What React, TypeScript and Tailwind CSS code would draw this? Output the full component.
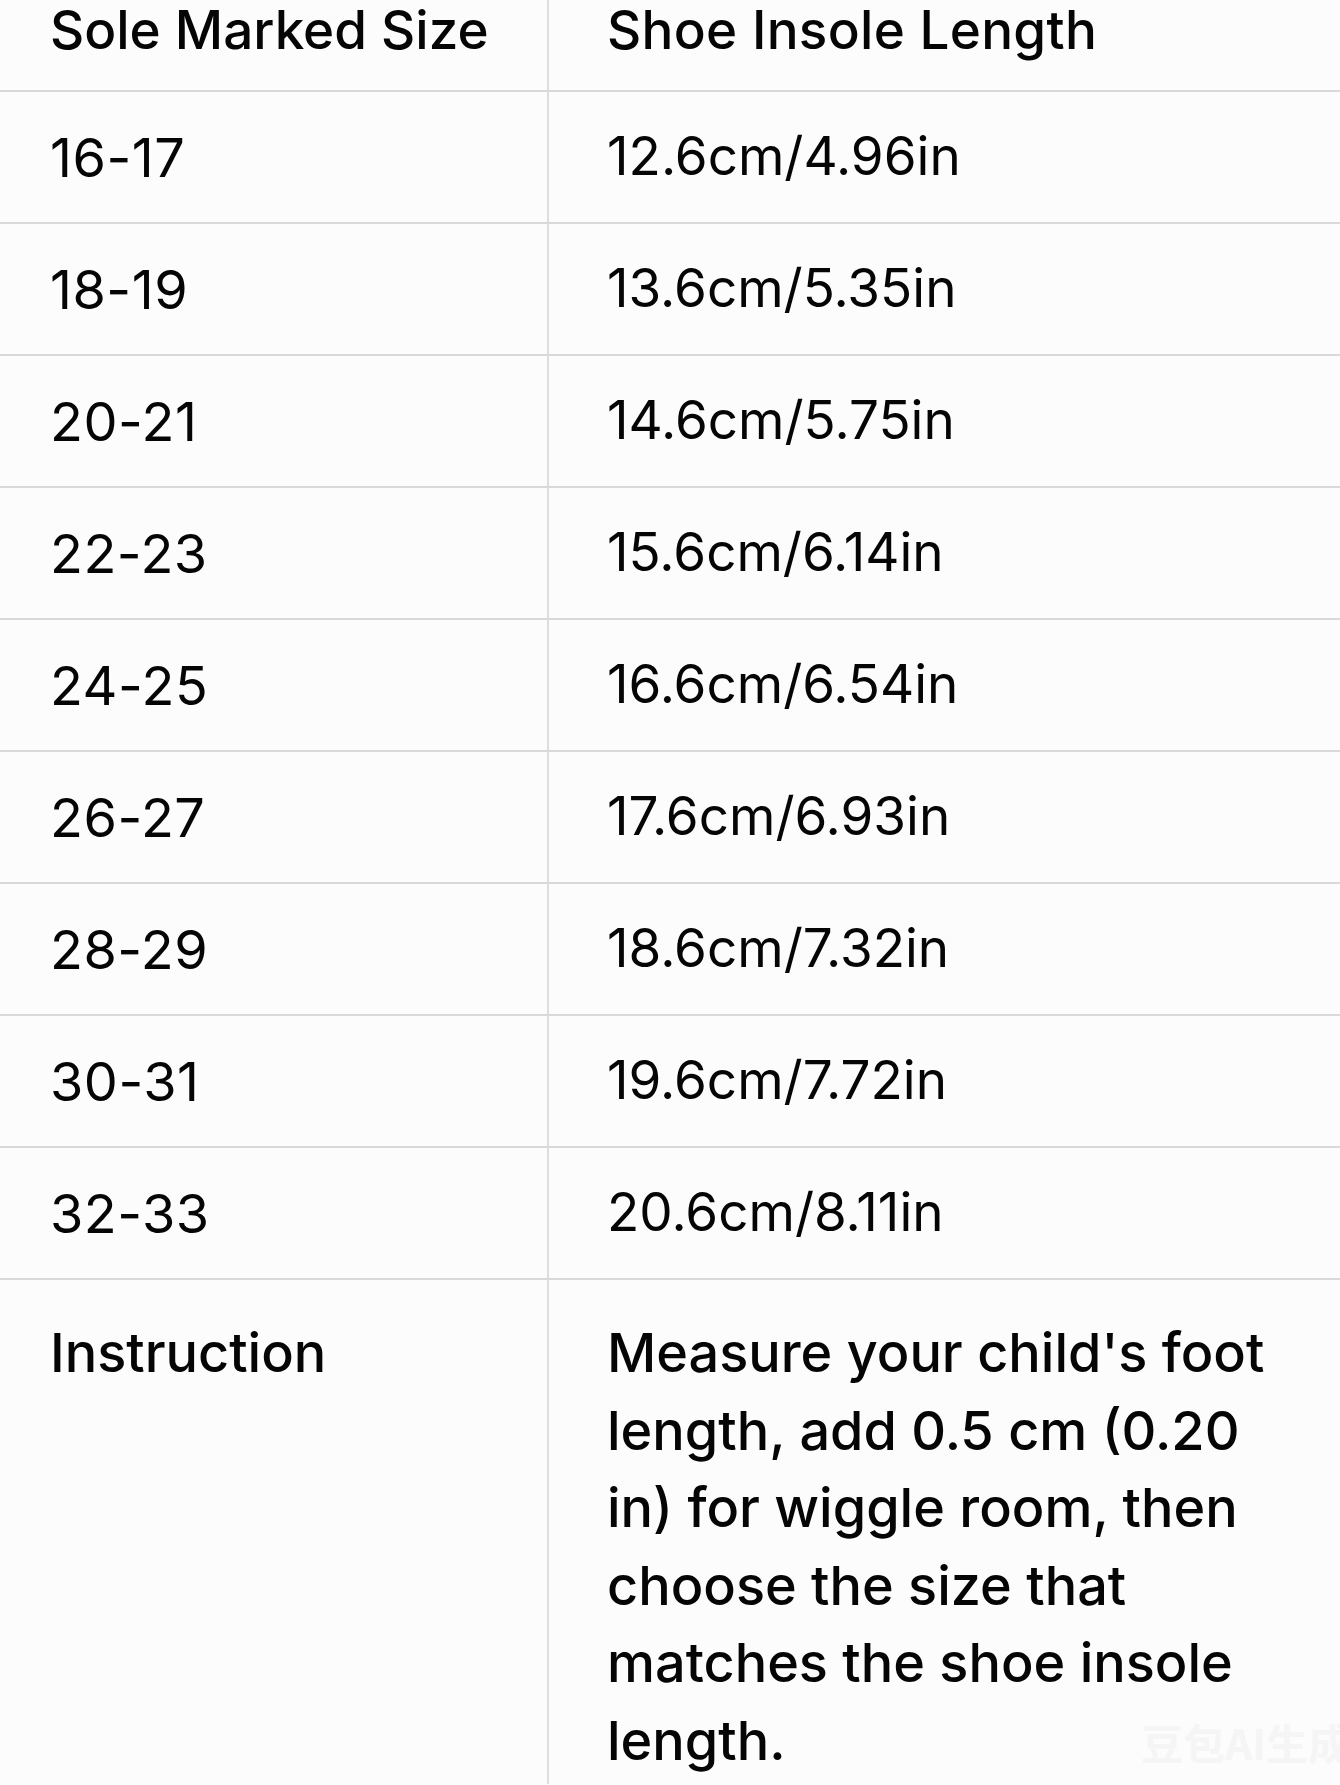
const ROWS = [
  ["16-17", "12.6cm/4.96in"],
  ["18-19", "13.6cm/5.35in"],
  ["20-21", "14.6cm/5.75in"],
  ["22-23", "15.6cm/6.14in"],
  ["24-25", "16.6cm/6.54in"],
  ["26-27", "17.6cm/6.93in"],
  ["28-29", "18.6cm/7.32in"],
  ["30-31", "19.6cm/7.72in"],
  ["32-33", "20.6cm/8.11in"],
];

const INSTRUCTION = [
  "Measure your child's foot",
  "length, add 0.5 cm (0.20",
  "in) for wiggle room, then",
  "choose the size that",
  "matches the shoe insole",
  "length.",
];

export default function App() {
  return (
    <div className="relative min-h-[1785px] w-[1340px] overflow-hidden bg-[#fcfcfc] font-['Inter',sans-serif] text-[#050505]">
      {/* Header */}
      <div className="flex h-[92px] border-b-2 border-[#d9d9d9]">
        <div className="w-[549px] shrink-0 border-r-2 border-[#dedede] pl-[50px] text-[53px] leading-[60px] font-medium">
          Sole Marked Size
        </div>
        <div className="pl-[58px] text-[53px] leading-[60px] font-medium tracking-[0.3px]">
          Shoe Insole Length
        </div>
      </div>

      {/* Size rows */}
      {ROWS.map(([size, length]) => (
        <div key={size} className="flex h-[132px] border-b-2 border-[#d9d9d9]">
          <div className="flex w-[549px] shrink-0 items-center border-r-2 border-[#dedede] pl-[50px] text-[54px] tracking-[0.5px]">
            {size}
          </div>
          <div className="flex items-center pl-[58px] text-[53px]">
            {length}
          </div>
        </div>
      ))}

      {/* Instruction */}
      <div className="flex h-[504px]">
        <div className="w-[549px] shrink-0 border-r-2 border-[#dedede] pl-[50px] pt-[34px] text-[54px] leading-[77px] font-medium">
          Instruction
        </div>
        <div className="pl-[58px] pt-[34px] text-[54px] leading-[77.5px] font-medium">
          {INSTRUCTION.map((line) => (
            <div key={line}>{line}</div>
          ))}
        </div>
      </div>

      {/* faint watermark */}
      <div className="absolute bottom-[22px] right-[-10px] font-['Noto_Sans_CJK_SC',sans-serif] text-[42px] font-bold leading-none text-[#f5f5f5]">
        豆包AI生成
      </div>
    </div>
  );
}
